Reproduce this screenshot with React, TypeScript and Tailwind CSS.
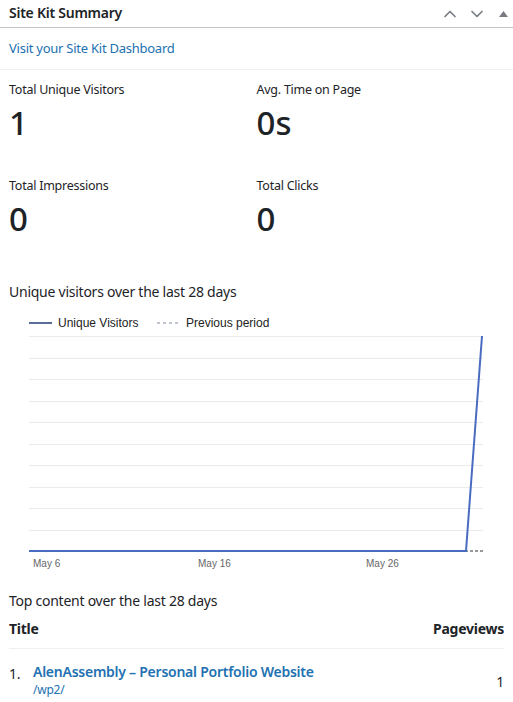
import { ChevronUp, ChevronDown } from "lucide-react";

const stats = [
  { label: "Total Unique Visitors", value: "1" },
  { label: "Avg. Time on Page", value: "0s" },
  { label: "Total Impressions", value: "0" },
  { label: "Total Clicks", value: "0" },
];

const gridLines = [26, 48, 69, 91, 112, 134, 155, 177, 198, 220];

function VisitorsChart() {
  // x offsets are relative to the 9px content padding
  return (
    <svg width="495" height="265" className="block tracking-normal" style={{ fontFamily: "'Liberation Sans', Arial, sans-serif" }}>
      <line x1="20" y1="13" x2="43" y2="13" stroke="#5a6d9a" strokeWidth="2" />
      <text x="49" y="17" fontSize="12" fill="#222">Unique Visitors</text>
      <line x1="148" y1="13" x2="170" y2="13" stroke="#aab4c2" strokeWidth="1.5" strokeDasharray="3 3" />
      <text x="177" y="17" fontSize="12" fill="#222">Previous period</text>
      {gridLines.map((y) => (
        <line key={y} x1="20" y1={y + 0.5} x2="474" y2={y + 0.5} stroke="#ebebeb" strokeWidth="1" />
      ))}
      <line x1="441" y1="241" x2="474" y2="241" stroke="#333" strokeWidth="1" strokeDasharray="3 2" />
      <polyline points="20,241 457,241 473,26" fill="none" stroke="#4a6cc0" strokeWidth="2" />
      <text x="24" y="257" fontSize="10" fill="#666">May 6</text>
      <text x="189" y="257" fontSize="10" fill="#666">May 16</text>
      <text x="357" y="257" fontSize="10" fill="#666">May 26</text>
    </svg>
  );
}

export default function App() {
  return (
    <div className="w-[513px] min-h-[702px] bg-white text-[#1d2327] tracking-[-0.25px]" style={{ fontFamily: "'Noto Sans', 'Open Sans', sans-serif" }}>
      <div className="flex items-center justify-between h-[28px] pl-[9px] pr-[5px] border-b border-[#c3c4c7]">
        <h2 className="text-[14px] font-semibold -mt-[2px]">Site Kit Summary</h2>
        <div className="flex items-center text-[#787c82]">
          <ChevronUp size={20} strokeWidth={2} />
          <ChevronDown size={20} strokeWidth={2} className="ml-[7px]" />
          <span className="w-[9px] ml-[12px] flex justify-center">
            <svg width="9" height="6" viewBox="0 0 9 6">
              <polygon points="4.5,0 9,6 0,6" fill="#787c82" />
            </svg>
          </span>
        </div>
      </div>

      <div className="h-[42px] flex items-center px-[9px] border-b border-[#f0f0f1]">
        <a href="#" className="text-[13px] text-[#2271b1]">Visit your Site Kit Dashboard</a>
      </div>

      <div className="grid grid-cols-2 px-[9px] pt-[11px]">
        {stats.map((s) => (
          <div key={s.label} className="h-[96px]">
            <p className="text-[12.5px] leading-[18px]">{s.label}</p>
            <p className="text-[33px] font-medium leading-[40px] mt-[4px] tracking-normal">{s.value}</p>
          </div>
        ))}
      </div>

      <div className="px-[9px]">
        <p className="text-[14px] leading-[20px] mt-[9px]">Unique visitors over the last 28 days</p>
        <div className="mt-[8px]">
          <VisitorsChart />
        </div>
        <p className="text-[14px] leading-[20px] mt-[16px]">Top content over the last 28 days</p>
        <div className="flex justify-between text-[14px] font-bold mt-[7px] pb-[9px] border-b border-[#f0f0f1]">
          <span>Title</span>
          <span>Pageviews</span>
        </div>
        <div className="flex items-center justify-between mt-[14px]">
          <div className="flex text-[14px]">
            <span className="w-[24px]">1.</span>
            <div>
              <a href="#" className="block font-semibold text-[#2271b1] leading-[18px]">AlenAssembly – Personal Portfolio Website</a>
              <span className="block text-[12px] text-[#2271b1] leading-[18px]">/wp2/</span>
            </div>
          </div>
          <span className="text-[14px]">1</span>
        </div>
      </div>
    </div>
  );
}
